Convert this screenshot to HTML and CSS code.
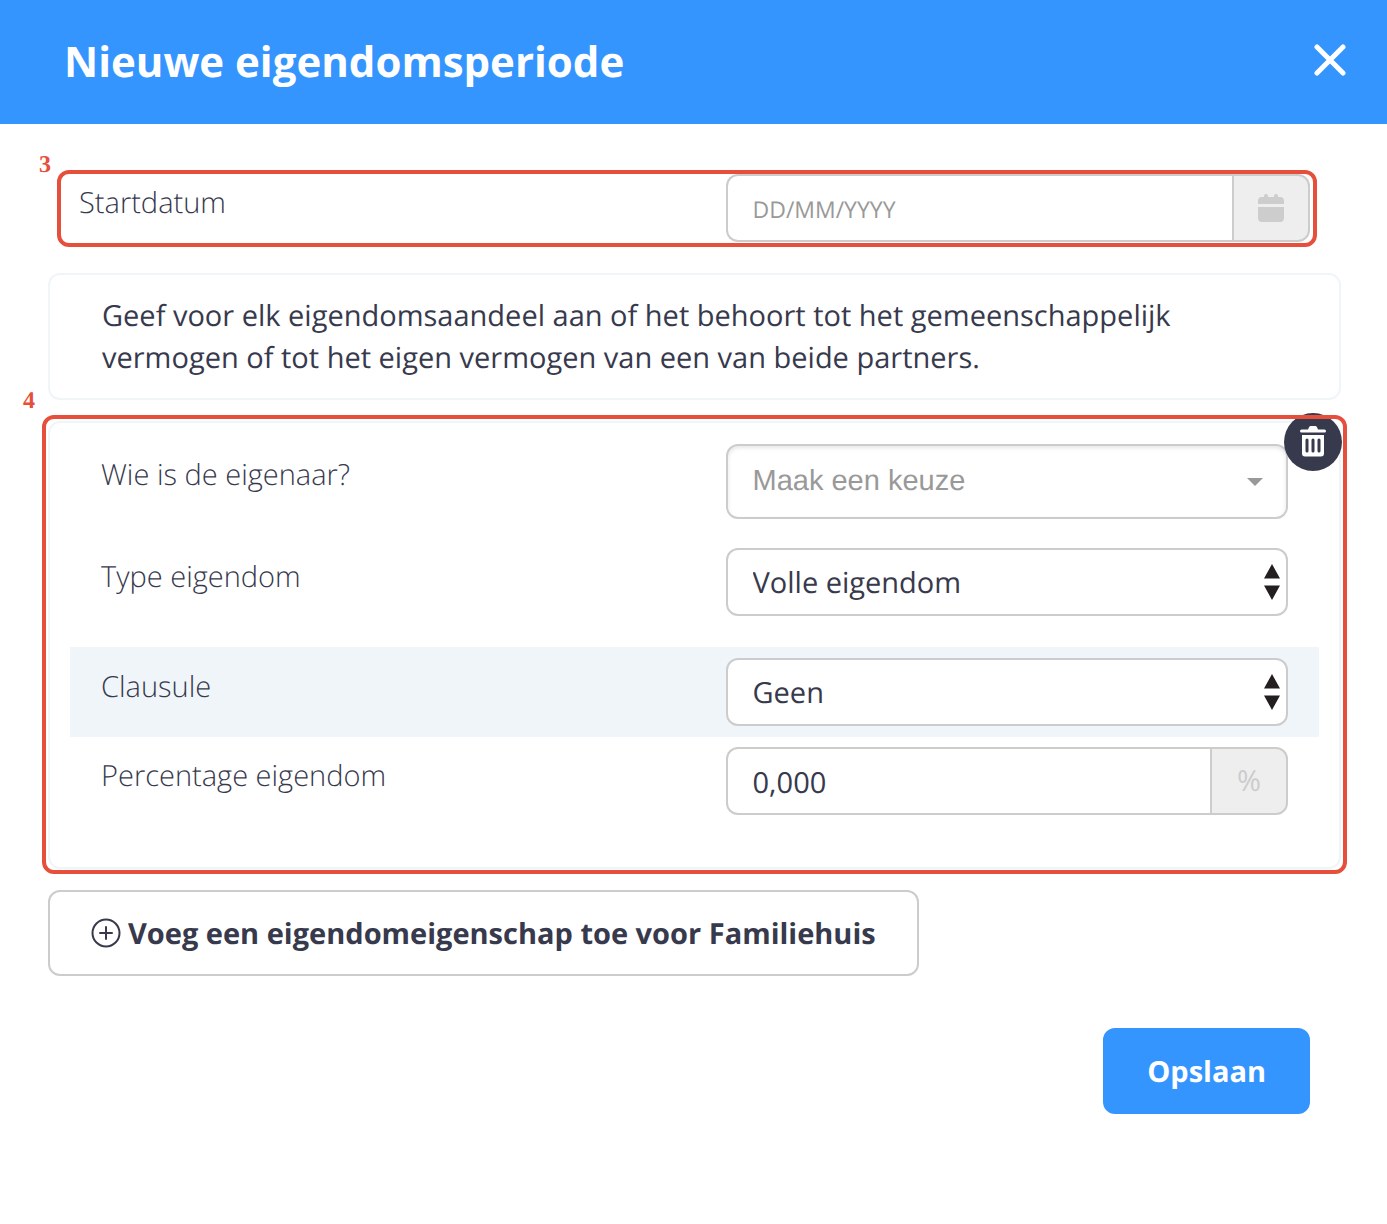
FILE: index.html
```html
<!DOCTYPE html>
<html lang="nl">
<head>
<meta charset="utf-8">
<meta name="viewport" content="width=device-width, initial-scale=1">
<title>Nieuwe eigendomsperiode</title>
<link rel="stylesheet" href="styles.css">
</head>
<body>
<header class="header">
  <h1 class="title">Nieuwe eigendomsperiode</h1>
  <button class="close" type="button" aria-label="Sluiten">
    <svg width="32" height="32" viewBox="0 0 32 32" fill="none" stroke="#fff" stroke-width="5" stroke-linecap="round"><path d="M3 3L29 29M29 3L3 29"/></svg>
  </button>
</header>
<form class="form">
  <div class="row row-date">
    <label class="label" for="start">Startdatum</label>
    <div class="field group">
      <input class="input input-date" id="start" type="text" placeholder="DD/MM/YYYY">
      <span class="addon">
        <svg width="26" height="28" viewBox="0 0 26 28" fill="#cdcdcd"><path d="M0 10V7a4 4 0 0 1 4-4h2V2a2 2 0 0 1 4 0v1h6V2a2 2 0 0 1 4 0v1h2a4 4 0 0 1 4 4v3zM0 13h26v11a4 4 0 0 1-4 4H4a4 4 0 0 1-4-4z"/></svg>
      </span>
    </div>
    <div class="frame frame-date"><span class="step step-date">3</span></div>
  </div>

  <p class="card info">Geef voor elk eigendomsaandeel aan of het behoort tot het gemeenschappelijk vermogen of tot het eigen vermogen van een van beide partners.</p>

  <section class="card owner">
    <div class="row row-owner">
      <label class="label" for="owner">Wie is de eigenaar?</label>
      <div class="field picker">
        <select class="input select select-owner" id="owner"><option>Maak een keuze</option></select>
        <svg class="caret" width="16" height="8" viewBox="0 0 16 8" fill="#999"><path d="M0 0h16L8 8z"/></svg>
      </div>
    </div>
    <div class="row row-type">
      <label class="label" for="type">Type eigendom</label>
      <div class="field picker">
        <select class="input select" id="type"><option>Volle eigendom</option></select>
        <svg class="arrows" width="16" height="36" viewBox="0 0 16 36" fill="#231f20"><path d="M8 0l8 14.500H0zM0 21.500h16L8 36z"/></svg>
      </div>
    </div>
    <div class="row row-striped">
      <label class="label" for="clause">Clausule</label>
      <div class="field picker">
        <select class="input select" id="clause"><option>Geen</option></select>
        <svg class="arrows" width="16" height="36" viewBox="0 0 16 36" fill="#231f20"><path d="M8 0l8 14.500H0zM0 21.500h16L8 36z"/></svg>
      </div>
    </div>
    <div class="row row-share">
      <label class="label" for="share">Percentage eigendom</label>
      <div class="field group">
        <input class="input" id="share" type="text" value="0,000">
        <span class="addon">%</span>
      </div>
    </div>
    <button class="remove" type="button" aria-label="Verwijderen">
      <svg width="26" height="31" viewBox="0 0 26 31"><path fill="#fff" d="M1.500 3.500H8L9 1.200Q9.500 0 11 0h4q1.500 0 2 1.200l1 2.300h6.500Q26 3.500 26 5t-1.500 1.500h-23Q0 6.500 0 5t1.500-1.500zM2 9h22v18.500a3 3 0 0 1-3 3H5a3 3 0 0 1-3-3z"/><path stroke="#37394d" stroke-width="3" stroke-linecap="round" d="M7 14v11M13 14v11M19 14v11"/></svg>
    </button>
    <div class="frame frame-owner"><span class="step step-owner">4</span></div>
  </section>

  <button class="button add" type="button">
    <svg width="30" height="30" viewBox="0 0 30 30" fill="none" stroke="#37394d" stroke-width="2" stroke-linecap="round"><circle cx="15" cy="15" r="13.500"/><path d="M15 9v12M9 15h12"/></svg>
    <span>Voeg een eigendomeigenschap toe voor Familiehuis</span>
  </button>
  <div class="actions"><button class="button save" type="submit">Opslaan</button></div>
</form>
</body>
</html>
```
FILE: styles.css
```css
* {
  box-sizing: border-box;
}

body {
  margin: 0;
  background: #fff;
  color: #37394d;
  font: 400 29px/42px "Open Sans", sans-serif;
  text-rendering: geometricPrecision;
}

.header {
  display: flex;
  align-items: center;
  justify-content: space-between;
  min-height: 124px;
  padding: 0 41px 5px 64px;
  background: #3595ff;
  color: #fff;
}

.title {
  margin: 0;
  padding-top: 4px;
  font-size: 42px;
  line-height: 60px;
  font-weight: 700;
}

.close {
  display: flex;
  padding: 0;
  border: 0;
  background: none;
}

.form {
  padding: 50px 46px 110px 48px;
}

.row {
  display: grid;
  grid-template-columns: 1fr 1fr;
}

.row-date {
  position: relative;
}

.label {
  padding: 8px 31px 0;
  font-weight: 300;
}

.field {
  margin: 0 31px;
}

.group {
  display: flex;
}

.picker {
  display: grid;
  align-items: center;
}

.picker > * {
  grid-area: 1 / 1;
}

.input {
  width: 100%;
  min-width: 0;
  height: 68px;
  padding: 2px 25px 0;
  border: 2px solid #ccc;
  border-radius: 12px;
  background: #fff;
  color: #37394d;
  font: inherit;
  text-rendering: inherit;
}

.group .input {
  flex: 1;
  border-right: 0;
  border-radius: 12px 0 0 12px;
}

.input-date {
  font-size: 23px;
}

.input::placeholder {
  color: #999;
  opacity: 1;
}

.select {
  appearance: none;
}

.select-owner {
  height: 75px;
  padding: 0 25px 2px;
  box-shadow: inset 0 2px 4px rgba(0, 0, 0, 0.1);
  color: #999;
  font-family: "Liberation Sans", sans-serif;
}

.caret,
.arrows {
  justify-self: end;
  pointer-events: none;
}

.caret {
  margin-right: 25px;
}

.arrows {
  margin-right: 8px;
}

.addon {
  display: flex;
  align-items: center;
  justify-content: center;
  width: 78px;
  border: 2px solid #ccc;
  border-radius: 0 12px 12px 0;
  background: #eee;
  color: #ccc;
}

.card {
  margin: 0;
  border: 2px solid #f0f5f8;
  border-radius: 12px;
}

.info {
  margin-top: 31px;
  padding: 20px 52px 19px;
}

.owner {
  position: relative;
  margin-top: 21px;
  padding: 21px 20px 52px;
}

.row-owner .label {
  padding-top: 10px;
}

.row-type {
  padding: 29px 0 31px;
}

.row-striped {
  padding: 11px 0;
  background: #eff5f8;
}

.row-share {
  padding-top: 10px;
}

.remove {
  position: absolute;
  top: -10px;
  right: -3px;
  display: flex;
  align-items: center;
  justify-content: center;
  width: 58px;
  height: 58px;
  padding: 0 0 2px;
  border: 0;
  border-radius: 50%;
  background: #37394d;
}

.frame {
  position: absolute;
  border: 4px solid #e54f3b;
  border-radius: 12px;
  pointer-events: none;
}

.frame-date {
  inset: -4px 24px -5px 9px;
}

.frame-owner {
  inset: -8px -8px -7px -8px;
}

.step {
  position: absolute;
  color: #e54f3b;
  font: 700 24px/28px "Liberation Serif", serif;
}

.step-date {
  top: -23px;
  left: -22px;
}

.step-owner {
  top: -32px;
  left: -23px;
}

.button {
  height: 86px;
  padding: 2px 41px 0;
  border: 2px solid #ccc;
  border-radius: 12px;
  background: #fff;
  color: #37394d;
  font: inherit;
  font-weight: 700;
  text-rendering: inherit;
}

.add {
  display: flex;
  align-items: center;
  gap: 7px;
  margin-top: 21px;
}

.add svg {
  margin-bottom: 2px;
}

.actions {
  display: flex;
  justify-content: flex-end;
  padding: 52px 31px 0;
}

.save {
  padding: 2px 42px 0;
  border-color: #3595ff;
  background: #3595ff;
  color: #fff;
}
```
